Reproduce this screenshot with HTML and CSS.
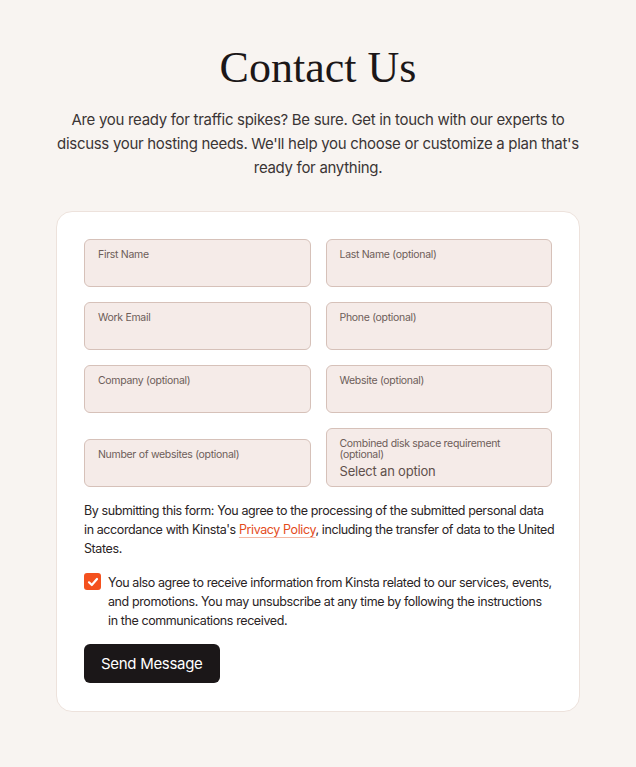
FILE: index.html
```html
<!DOCTYPE html>
<html>
<head>
    <title>Contact Us</title>
    <link rel="stylesheet" href="styles.css">
</head>
<body>
    <div class="container">
        <h1>Contact Us</h1>
        <p class="intro">Are you ready for traffic spikes? Be sure. Get in touch with our experts to discuss your hosting needs. We'll help you choose or customize a plan that's ready for anything.</p>

        <form class="card">
            <div class="fields">
                <label class="field"><span class="label">First Name</span></label>
                <label class="field"><span class="label">Last Name (optional)</span></label>
                <label class="field"><span class="label">Work Email</span></label>
                <label class="field"><span class="label">Phone (optional)</span></label>
                <label class="field"><span class="label">Company (optional)</span></label>
                <label class="field"><span class="label">Website (optional)</span></label>
                <label class="field"><span class="label">Number of websites (optional)</span></label>
                <label class="field select">
                    <span class="label">Combined disk space requirement (optional)</span>
                    <span class="value">Select an option</span>
                </label>
            </div>

            <p class="legal">By submitting this form: You agree to the processing of the submitted personal data in accordance with Kinsta's <a href="#">Privacy Policy</a>, including the transfer of data to the United States.</p>

            <div class="consent">
                <span class="checkbox">
                    <svg width="12" height="12" viewBox="0 0 12 12"><path d="M2 6.3 L4.8 9 L10 3" fill="none" stroke="#fff" stroke-width="2.2" stroke-linecap="round" stroke-linejoin="round"/></svg>
                </span>
                <p>You also agree to receive information from Kinsta related to our services, events, and promotions. You may unsubscribe at any time by following the instructions in the communications received.</p>
            </div>

            <button type="button" class="button">Send Message</button>
        </form>
    </div>
</body>
</html>
```

FILE: styles.css
```css
body {
    margin: 0;
    background: #f8f4f1;
    font-family: Inter, "Noto Sans", sans-serif;
    color: #2a2425;
}
.container {
    width: 524px;
    margin: 0 auto;
    padding-top: 40px;
}
h1 {
    font-family: "Liberation Serif", serif;
    font-weight: normal;
    font-size: 44px;
    line-height: 56px;
    text-align: center;
    color: #1c1718;
    margin: 0 0 12px;
}
.intro {
    font-size: 15px;
    line-height: 24px;
    letter-spacing: -0.3px;
    text-align: center;
    color: #3b3535;
    margin: 0 -6px 31px;
}
.card {
    background: white;
    border: 1px solid #ede2dc;
    border-radius: 16px;
    padding: 27px 27px 28px;
}
.fields {
    display: grid;
    grid-template-columns: 1fr 1fr;
    gap: 15px;
    align-items: end;
}
.field {
    display: flex;
    flex-direction: column;
    height: 48px;
    box-sizing: border-box;
    padding: 7px 13px;
    background: #f5ebe8;
    border: 1px solid #d6c1b9;
    border-radius: 6px;
}
.field.select {
    height: 59px;
    padding-top: 9px;
}
.label {
    font-size: 10.5px;
    line-height: 16px;
    letter-spacing: -0.3px;
    color: #6d5d59;
}
.select .label {
    line-height: 11px;
}
.value {
    font-size: 13px;
    line-height: 18px;
    letter-spacing: -0.2px;
    margin-top: 2px;
    color: #5f504c;
}
.legal {
    font-size: 12.5px;
    line-height: 19px;
    letter-spacing: -0.4px;
    margin: 14px -3px 15px 0;
}
.legal a {
    color: #e44c1c;
    text-decoration: underline;
    text-decoration-color: #f3b8a4;
    text-underline-offset: 3px;
}
.consent {
    display: flex;
    gap: 7px;
    align-items: flex-start;
}
.consent p {
    font-size: 12.5px;
    line-height: 19px;
    letter-spacing: -0.4px;
    margin: 0;
}
.checkbox {
    flex: none;
    display: flex;
    align-items: center;
    justify-content: center;
    width: 17px;
    height: 17px;
    background: #f4511e;
    border-radius: 3px;
}
.button {
    margin-top: 14px;
    background: #1b1718;
    color: white;
    border: none;
    border-radius: 6px;
    height: 39px;
    padding: 0 17px;
    font-family: Inter, "Noto Sans", sans-serif;
    font-size: 15px;
    letter-spacing: -0.3px;
    cursor: pointer;
}
```
